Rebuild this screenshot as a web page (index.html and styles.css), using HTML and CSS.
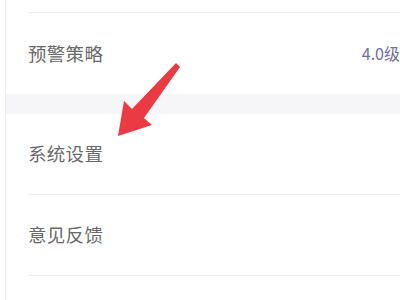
FILE: index.html
```html
<!DOCTYPE html>
<html lang="zh">
<head>
<meta charset="utf-8">
<link rel="stylesheet" href="styles.css">
</head>
<body>
<div class="page">
  <div class="panel">
    <div class="row row-top"><div class="row-inner"></div></div>
    <div class="row"><div class="row-inner last"><span class="label">预警策略</span><span class="value">4.0级</span></div></div>
    <div class="gap"></div>
    <div class="row"><div class="row-inner"><span class="label">系统设置</span></div></div>
    <div class="row"><div class="row-inner"><span class="label">意见反馈</span></div></div>
    <div class="row row-end"></div>
  </div>
  <svg class="arrow" width="80" height="90" viewBox="0 0 80 90">
    <path d="M62 2 L66 6 L30 57 L38 64 L4 75 L10 40 L18 48 Z" fill="#ec3a43"/>
  </svg>
</div>
</body>
</html>
```
FILE: styles.css
```css
html, body {
  margin: 0;
  padding: 0;
  background: #ffffff;
  overflow: hidden;
}
.page {
  position: relative;
  width: 400px;
  height: 300px;
  padding-left: 5px;
  box-sizing: border-box;
  overflow: hidden;
  font-family: "Noto Sans CJK SC", "Noto Sans", sans-serif;
}
.panel {
  border-left: 1px solid #ececec;
  height: 300px;
  overflow: hidden;
}
.row {
  padding-left: 22px;
  height: 81px;
  box-sizing: border-box;
}
.row-top {
  height: 13px;
}
.row-end {
  height: 24px;
}
.row-inner {
  height: 100%;
  box-sizing: border-box;
  border-bottom: 1px solid #efefef;
  display: flex;
  align-items: center;
  justify-content: space-between;
}
.row-inner.last {
  border-bottom: none;
}
.label {
  font-size: 18.5px;
  color: #6a6a6a;
  letter-spacing: 0.3px;
  margin-top: -2px;
}
.value {
  font-size: 16px;
  color: #6d70a3;
  white-space: nowrap;
  margin-right: 0;
  margin-top: -2px;
}
.gap {
  height: 20px;
  background: #f6f6f8;
}
.arrow {
  position: absolute;
  left: 114px;
  top: 61px;
}
```
